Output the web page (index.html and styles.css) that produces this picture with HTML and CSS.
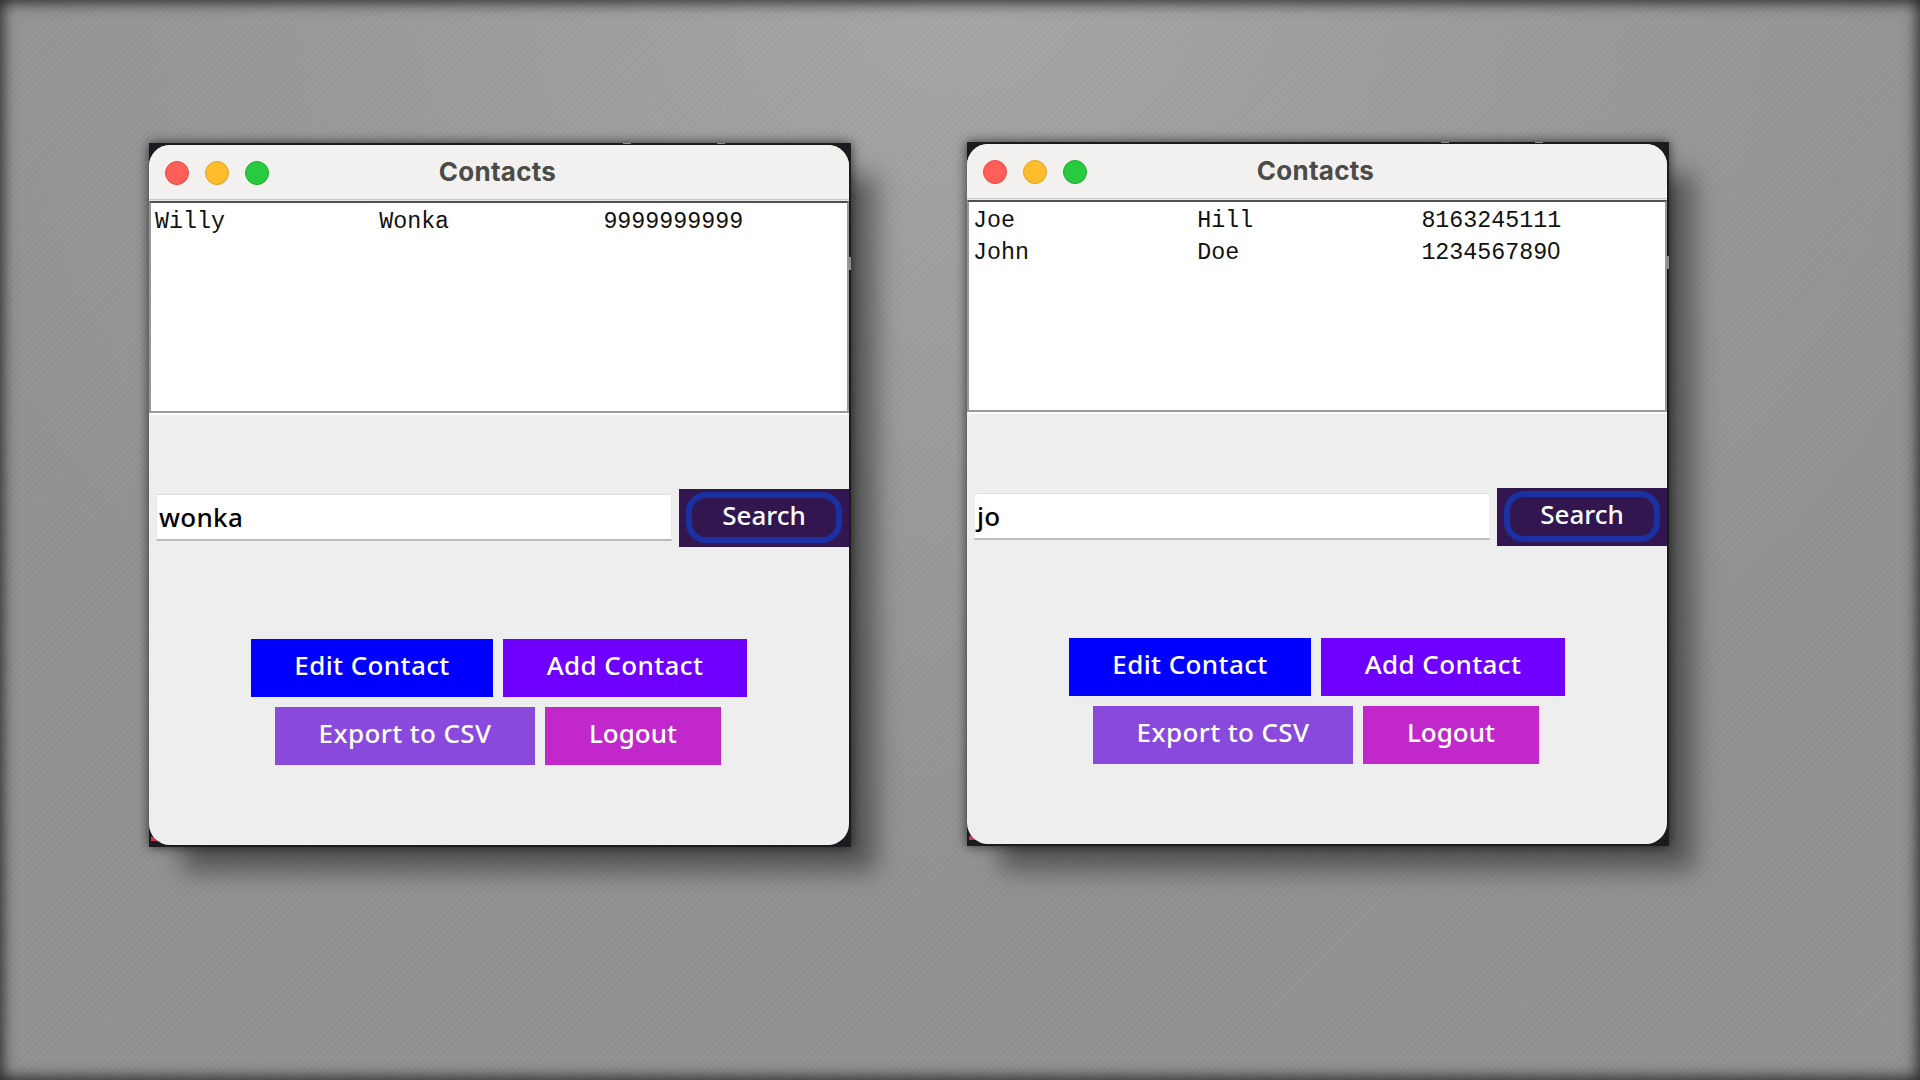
FILE: index.html
```html
<!DOCTYPE html>
<html lang="en">
<head>
<meta charset="utf-8">
<title>Contacts</title>
<link rel="stylesheet" href="styles.css">
</head>
<body>
<main class="desktop">
  <section class="frame">
    <i class="speck speck-a"></i><i class="speck speck-b"></i><i class="speck speck-c"></i><i class="speck speck-d"></i>
    <div class="window">
      <header class="titlebar"><i class="light red"></i><i class="light yellow"></i><i class="light green"></i><h1>Contacts</h1></header>
      <div class="list">
        <div class="row"><span>Willy</span><span>Wonka</span><span>9999999999</span></div>
      </div>
      <div class="search"><div class="field"><span class="query">wonka</span></div><button class="find"><span class="label">Search</span></button></div>
      <div class="actions">
        <div class="line"><button class="edit">Edit Contact</button><button class="add">Add Contact</button></div>
        <div class="line"><button class="export">Export to CSV</button><button class="logout">Logout</button></div>
      </div>
    </div>
  </section>
  <section class="frame second">
    <i class="speck speck-a"></i><i class="speck speck-b"></i><i class="speck speck-c"></i><i class="speck speck-d"></i>
    <div class="window">
      <header class="titlebar"><i class="light red"></i><i class="light yellow"></i><i class="light green"></i><h1>Contacts</h1></header>
      <div class="list">
        <div class="row"><span>Joe</span><span>Hill</span><span>8163245111</span></div>
        <div class="row"><span>John</span><span>Doe</span><span>123456789<b class="zero">0</b></span></div>
      </div>
      <div class="search"><div class="field"><span class="query">jo</span></div><button class="find"><span class="label">Search</span></button></div>
      <div class="actions">
        <div class="line"><button class="edit">Edit Contact</button><button class="add">Add Contact</button></div>
        <div class="line"><button class="export">Export to CSV</button><button class="logout">Logout</button></div>
      </div>
    </div>
  </section>
</main>
</body>
</html>
```
FILE: styles.css
```css
*, *::before { box-sizing: border-box; }
body { margin: 0; }
.desktop {
  width: 1920px; height: 1080px; overflow: hidden;
  display: flex; align-items: flex-start; gap: 116px;
  padding: 143px 0 0 149px;
  box-shadow: inset 0 0 15px 2px rgba(0,0,0,.8);
  background:
    repeating-linear-gradient(135deg, rgba(0,0,0,.025), rgba(255,255,255,.025) 2.3px, rgba(0,0,0,.025) 4.6px),
    radial-gradient(ellipse 1100px 900px at 50% 0, #a6a6a6, #999 60%, #929292);
}
.frame {
  position: relative; flex: none; width: 702px; height: 704px; padding: 2px 2px 2px 0;
  background: #1a1b1f;
  box-shadow: 0 0 11px rgba(0,0,0,.7), 29px 28px 24px -4px rgba(0,0,0,.42);
}
.second { margin-top: -1px; }
.speck { position: absolute; background: #8b8b90; }
.speck-a { left: 474px; top: 0; width: 8px; height: 1px; }
.speck-b { left: 568px; top: 0; width: 8px; height: 1px; }
.speck-c { right: 0; top: 114px; width: 2px; height: 13px; }
.speck-d { left: 2px; bottom: 6px; width: 7px; height: 4px; background: #c5394c; }
.window {
  position: relative; width: 700px; height: 700px; border-radius: 21px; overflow: hidden;
  display: flex; flex-direction: column; background: #eee;
}
.titlebar {
  position: relative; flex: none; height: 56px; padding: 16px; display: flex; gap: 16px;
  background: #f2f1ef; border-bottom: 1px solid #e9e9e9; box-shadow: inset 0 -1px #c9c9c7;
}
.light { width: 24px; height: 24px; border-radius: 50%; border: 1px solid; }
.red { background: #ff5f58; border-color: #e24b42; }
.yellow { background: #ffbd2e; border-color: #e0a023; }
.green { background: #29c941; border-color: #1cac2c; }
h1 {
  position: absolute; inset: 0; margin: 0; padding-right: 3px; text-align: center;
  font: 700 26px/53px Inter, sans-serif; color: #4b4b48; letter-spacing: .25px;
}
.list {
  flex: none; height: 212px; border: 2px solid #999; border-top-color: #505050;
  background: #fff; padding: 4px 0 0 4px; box-shadow: 0 2px #fff;
  font: 23.3px/31.8px "Liberation Mono", monospace; color: #111;
}
.row { display: grid; grid-template-columns: 224.2px 224.2px 1fr; height: 31.8px; white-space: pre; }
.zero { display: inline-block; width: 14px; font: 23.3px/1 "Liberation Sans", sans-serif; }
.search { flex: none; height: 58px; margin-top: 76px; display: flex; align-items: flex-start; }
.field {
  width: 516px; height: 47px; margin: 5px 7px 0 7px; background: #fff;
  border: 1px solid #ddd; border-left-color: #eaeaea; border-right-color: #eaeaea; border-bottom: 2px solid #bbb;
}
.query { display: block; padding-left: 2px; font: 500 26px/44px "Noto Sans", sans-serif; color: #000; letter-spacing: .3px; }
button {
  border: 0; border-radius: 0; padding: 0 0 5px; height: 58px; color: #fff;
  font: 500 26px/53px "Noto Sans", sans-serif; letter-spacing: .4px; white-space: nowrap;
}
.find { position: relative; width: 170px; background: #321650; letter-spacing: 0; }
.find::before {
  content: ""; position: absolute; left: 7px; top: 3px; width: 156px; height: 51px;
  border: 6px solid #1b30a3; border-radius: 20px;
}
.label { position: relative; }
.actions { display: flex; flex-direction: column; align-items: center; gap: 10px; margin-top: 92px; }
.line { display: flex; gap: 10px; }
.edit { width: 242px; background: #00f; }
.add { width: 244px; background: #6f00ff; }
.line + .line { padding-right: 2px; }
.export { width: 260px; background: #8849dc; }
.logout { width: 176px; background: #c127cb; letter-spacing: 0; }
```
